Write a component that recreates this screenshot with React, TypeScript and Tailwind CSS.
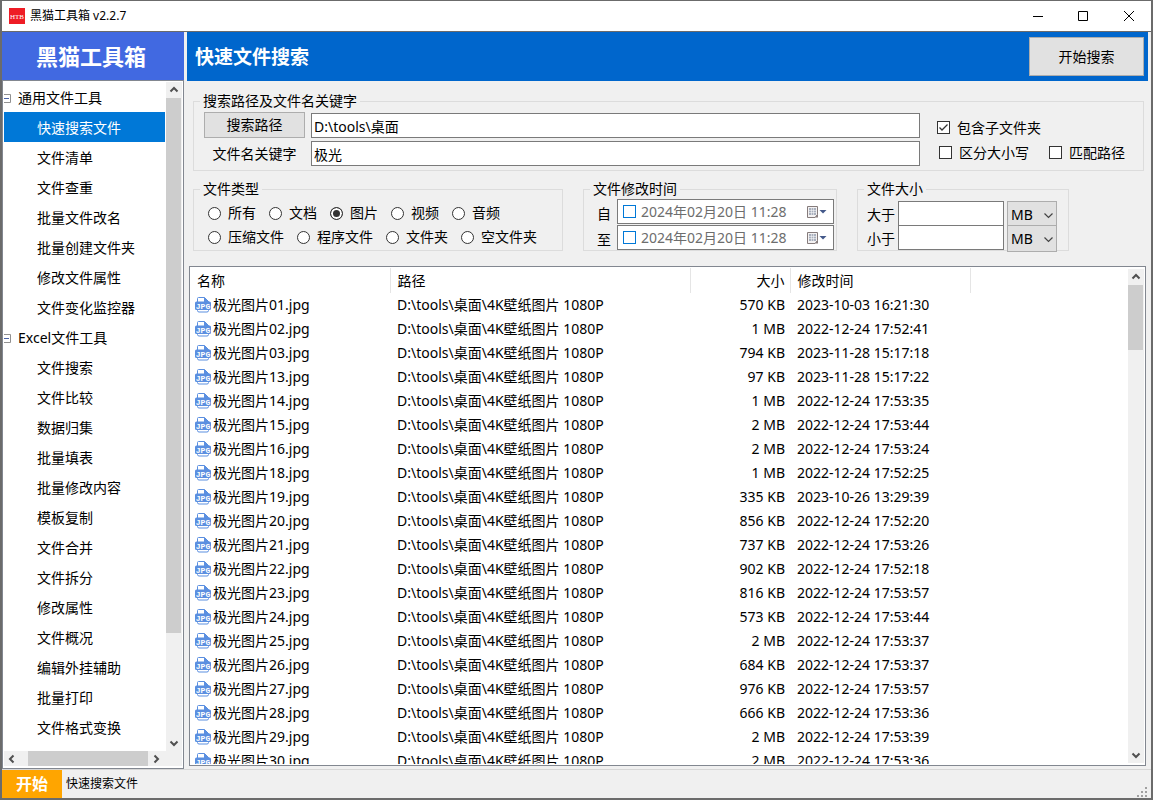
import type { ReactNode } from "react";
import clsx from "clsx";

const navGroups = [
  {
    title: "通用文件工具",
    items: [
      "快速搜索文件",
      "文件清单",
      "文件查重",
      "批量文件改名",
      "批量创建文件夹",
      "修改文件属性",
      "文件变化监控器",
    ],
  },
  {
    title: "Excel文件工具",
    items: [
      "文件搜索",
      "文件比较",
      "数据归集",
      "批量填表",
      "批量修改内容",
      "模板复制",
      "文件合并",
      "文件拆分",
      "修改属性",
      "文件概况",
      "编辑外挂辅助",
      "批量打印",
      "文件格式变换",
    ],
  },
];

const files = [
  ["01", "570 KB", "2023-10-03 16:21:30"],
  ["02", "1 MB", "2022-12-24 17:52:41"],
  ["03", "794 KB", "2023-11-28 15:17:18"],
  ["13", "97 KB", "2023-11-28 15:17:22"],
  ["14", "1 MB", "2022-12-24 17:53:35"],
  ["15", "2 MB", "2022-12-24 17:53:44"],
  ["16", "2 MB", "2022-12-24 17:53:24"],
  ["18", "1 MB", "2022-12-24 17:52:25"],
  ["19", "335 KB", "2023-10-26 13:29:39"],
  ["20", "856 KB", "2022-12-24 17:52:20"],
  ["21", "737 KB", "2022-12-24 17:53:26"],
  ["22", "902 KB", "2022-12-24 17:52:18"],
  ["23", "816 KB", "2022-12-24 17:53:57"],
  ["24", "573 KB", "2022-12-24 17:53:44"],
  ["25", "2 MB", "2022-12-24 17:53:37"],
  ["26", "684 KB", "2022-12-24 17:53:37"],
  ["27", "976 KB", "2022-12-24 17:53:57"],
  ["28", "666 KB", "2022-12-24 17:53:36"],
  ["29", "2 MB", "2022-12-24 17:53:39"],
  ["30", "2 MB", "2022-12-24 17:53:36"],
];

const fileTypes = [
  ["所有", "文档", "图片", "视频", "音频"],
  ["压缩文件", "程序文件", "文件夹", "空文件夹"],
];

const arrows = {
  up: "M4.5 9.5 8 6l3.5 3.5",
  down: "M4.5 6.5 8 10l3.5-3.5",
  left: "M9.5 4.5 6 8l3.5 3.5",
  right: "M6.5 4.5 10 8l-3.5 3.5",
};

function Arrow({ dir }: { dir: keyof typeof arrows }) {
  return (
    <svg viewBox="0 0 16 16" className="size-4 shrink-0" aria-hidden="true">
      <path d={arrows[dir]} fill="none" stroke="#505050" strokeWidth="2" />
    </svg>
  );
}

function JpgIcon() {
  return (
    <svg viewBox="0 0 16 16" className="size-4 shrink-0" aria-hidden="true">
      <path d="M2.5 5V1.5q0-1 1-1h6l4 4V5" fill="#fff" stroke="#5b8fe0" />
      <path d="M9 0v5h5z" fill="#5b8fe0" />
      <path d="M2.5 12.5v1q0 1.5 1.500 1.500h8q1.500 0 1.500-1.500v-1" fill="#fff" stroke="#5b8fe0" />
      <rect y="4.5" width="16" height="8.5" rx="1.5" fill="#5b8fe0" />
      <text
        x="8"
        y="11.500"
        textAnchor="middle"
        fontSize="8"
        fontWeight="700"
        fill="#fff"
        fontFamily="Liberation Mono, monospace"
      >
        JPG
      </text>
    </svg>
  );
}

function Group({ title, className, children }: { title: string; className?: string; children: ReactNode }) {
  return (
    <fieldset className={clsx("min-w-0 border border-[#dcdcdc]", className)}>
      <legend className="ml-1.5 px-[3px] leading-5">{title}</legend>
      {children}
    </fieldset>
  );
}

function Check({ label, checked }: { label: string; checked?: boolean }) {
  return (
    <label className="flex items-center gap-[7px] whitespace-nowrap">
      <span className="relative flex size-[13px]">
        <input
          type="checkbox"
          defaultChecked={checked}
          className="peer size-[13px] appearance-none border border-[#333] bg-white"
        />
        <svg viewBox="0 0 13 13" className="pointer-events-none absolute inset-0 hidden peer-checked:block">
          <path d="M2.5 6.5 5 9l5.5-5.5" fill="none" stroke="#333" strokeWidth="1.3" />
        </svg>
      </span>
      {label}
    </label>
  );
}

function DateRow({ id, label }: { id: string; label: string }) {
  return (
    <div className="flex h-[25px] items-center">
      <label htmlFor={id} className="w-[33px] shrink-0 pl-[13px] pt-1">
        {label}
      </label>
      <div className="flex h-full min-w-0 flex-1 items-center border border-[#7a7a7a] bg-white px-[5px]">
        <input
          type="checkbox"
          aria-label={label + "：启用"}
          className="size-[13px] shrink-0 appearance-none border border-[#0078d7] bg-white"
        />
        <input
          id={id}
          type="text"
          defaultValue="2024年02月20日 11:28"
          className="min-w-0 flex-1 bg-transparent pl-[5px] text-[#6d6d6d] outline-none"
        />
        <button type="button" aria-label="选择日期" className="shrink-0">
          <svg viewBox="0 0 22 14" className="h-[14px] w-[22px]">
            <path d="M1.5 1.5h10v8l-2.500 3h-7.500z" fill="#f4f2f2" stroke="#857b7b" />
            <path d="M3 3h7v7H3z" fill="#a9b0bd" />
            <path d="M5.500 3v7M7.500 3v7M3 5.500h7M3 7.500h7" stroke="#fff" strokeWidth=".5" />
            <path d="M9 12.500 12 9v3.500z" fill="#857b7b" />
            <path d="M13.500 5h7L17 8.500z" fill="#44598a" />
          </svg>
        </button>
      </div>
    </div>
  );
}

function TitleBar() {
  return (
    <header className="flex h-[31px] shrink-0 items-center border-b border-[#6b6b6b] bg-white pl-[7px] text-xs">
      <svg viewBox="0 0 16 16" className="size-4" aria-hidden="true">
        <rect width="16" height="16" fill="#ee1c25" />
        <text x="8" y="10.500" textAnchor="middle" fontSize="7" fill="#fff" fontFamily="Liberation Serif, serif">
          HTB
        </text>
      </svg>
      <h1 className="flex-1 pl-[5px]">黑猫工具箱 v2.2.7</h1>
      <button type="button" aria-label="最小化" className="flex w-[42px] justify-center">
        <svg viewBox="0 0 10 10" className="size-[10px]" stroke="#000">
          <path d="M0 5.500h10" />
        </svg>
      </button>
      <button type="button" aria-label="最大化" className="flex w-12 justify-center">
        <svg viewBox="0 0 10 10" className="size-[10px]" stroke="#000" fill="none">
          <path d="M.5.5h9v9h-9z" />
        </svg>
      </button>
      <button type="button" aria-label="关闭" className="flex w-11 justify-center">
        <svg viewBox="0 0 10 10" className="size-[10px]" stroke="#000">
          <path d="M0 0l10 10M10 0 0 10" />
        </svg>
      </button>
    </header>
  );
}

function Sidebar() {
  return (
    <aside className="flex w-[182px] shrink-0 flex-col">
      <h2 className="flex h-12 shrink-0 items-center justify-center bg-[#4169e1] pr-1 text-[22px] font-bold text-white">
        黑猫工具箱
      </h2>
      <div className="flex min-h-0 flex-1 flex-col border border-[#828790] bg-white px-px pb-0.5 pt-px">
        <div className="flex min-h-0 flex-1">
          <nav className="flex-1 overflow-hidden leading-[22px]">
            {navGroups.map((group, g) => (
              <div key={group.title}>
                <div className="flex h-[30px] items-center gap-[7px] pt-0.5">
                  <svg viewBox="0 0 7 9" className="h-[9px] w-[7px]" aria-hidden="true">
                    <path d="M0 .5h6.500v8H0" fill="#fff" stroke="#919191" />
                    <path d="M0 4.500h5" stroke="#4b63a7" />
                  </svg>
                  {group.title}
                </div>
                {group.items.map((item, i) => (
                  <a
                    key={item}
                    href="#"
                    className={clsx(
                      "flex h-[30px] items-center pl-[33px] pt-0.5",
                      g === 0 && i === 0 && "bg-[#0078d7] text-white",
                    )}
                  >
                    {item}
                  </a>
                ))}
              </div>
            ))}
          </nav>
          <div className="ml-px flex w-4 flex-col bg-[#f0f0f0]">
            <Arrow dir="up" />
            <div className="h-4/5 w-[15px] grow-0 bg-[#cdcdcd]" />
            <div className="flex-1" />
            <Arrow dir="down" />
          </div>
        </div>
        <div className="flex h-[15px] shrink-0 bg-[#f0f0f0] pr-[17px]">
          <Arrow dir="left" />
          <div className="ml-2 w-[120px] bg-[#cdcdcd]" />
          <Arrow dir="right" />
        </div>
      </div>
    </aside>
  );
}

function SearchPath() {
  return (
    <Group title="搜索路径及文件名关键字" className="ml-1.5 mr-1 pb-1">
      <div className="flex pl-2.5 pt-px">
        <div className="grid flex-1 grid-cols-[101px_1fr] items-end gap-x-1.5 gap-y-0.5">
          <button type="button" className="h-[26px] border border-[#adadad] bg-[#e1e1e1]">
            搜索路径
          </button>
          <input
            type="text"
            aria-label="搜索路径"
            defaultValue="D:\tools\桌面"
            className="h-[25px] border border-[#7a7a7a] bg-white px-0.5 outline-none"
          />
          <label htmlFor="keyword" className="h-[26px] text-center leading-[28px]">
            文件名关键字
          </label>
          <input
            id="keyword"
            type="text"
            defaultValue="极光"
            className="h-[25px] border border-[#7a7a7a] bg-white px-0.5 outline-none"
          />
        </div>
        <div className="grid w-[223px] grid-rows-[25px_25px] content-end pb-px pl-[17px]">
          <Check label="包含子文件夹" checked />
          <div className="flex gap-5 pl-0.5">
            <Check label="区分大小写" />
            <Check label="匹配路径" />
          </div>
        </div>
      </div>
    </Group>
  );
}

function Filters() {
  return (
    <div className="ml-1.5 mt-2 flex items-start gap-5">
      <Group title="文件类型" className="w-[370px]">
        <div className="flex h-[51px] flex-col pl-[14px] pt-0.5">
          {fileTypes.map((row, i) => (
            <div key={i} className="flex h-6 shrink-0 items-center gap-[13px]">
              {row.map((type) => (
                <label key={type} className="flex items-center gap-[7px] whitespace-nowrap">
                  <input
                    type="radio"
                    name="fileType"
                    defaultChecked={type === "图片"}
                    className="size-[13px] appearance-none rounded-full border border-[#333] bg-white checked:bg-[#333] checked:shadow-[inset_0_0_0_2px_#fff]"
                  />
                  {type}
                </label>
              ))}
            </div>
          ))}
        </div>
      </Group>
      <Group title="文件修改时间" className="w-[254px] pr-0.5">
        <div className="flex h-[51px] flex-col gap-px">
          <DateRow id="dateFrom" label="自" />
          <DateRow id="dateTo" label="至" />
        </div>
      </Group>
      <Group title="文件大小" className="w-[212px]">
        <div className="h-[51px] pl-[9px] pt-0.5">
          {["大于", "小于"].map((label, i) => (
            <div key={label} className="flex h-6 items-start">
              <label htmlFor={"size" + i} className="w-[31px] leading-[28px]">
                {label}
              </label>
              <input
                id={"size" + i}
                type="text"
                className="h-[25px] w-[106px] border border-[#7a7a7a] bg-white px-1 outline-none"
              />
              <div className="relative ml-[3px]">
                <select
                  aria-label={label + "单位"}
                  className="block h-[27px] w-[50px] appearance-none border border-[#adadad] bg-[#e1e1e1] pl-[3px]"
                >
                  <option>MB</option>
                  <option>KB</option>
                </select>
                <svg
                  viewBox="0 0 9 6"
                  className="pointer-events-none absolute right-1 top-3 h-1.5 w-[9px]"
                  aria-hidden="true"
                >
                  <path d="M.5.5l4 4 4-4" fill="none" stroke="#444" strokeWidth="1.2" />
                </svg>
              </div>
            </div>
          ))}
        </div>
      </Group>
    </div>
  );
}

function FileList() {
  return (
    <div className="mb-[3px] ml-0.5 mr-0.5 mt-[15px] flex min-h-0 flex-1 border border-[#828790] bg-white">
      <div className="min-w-0 flex-1 overflow-hidden border-y border-white">
        <table className="w-full table-fixed border-collapse text-left">
          <colgroup>
            <col className="w-[200px]" />
            <col className="w-[300px]" />
            <col className="w-[100px]" />
            <col className="w-[180px]" />
            <col />
          </colgroup>
          <thead>
            <tr className="h-[25px]">
              <th className="border-r border-[#e5e5e5] p-0 pl-[7px] font-normal">名称</th>
              <th className="border-r border-[#e5e5e5] p-0 pl-[7px] font-normal">路径</th>
              <th className="border-r border-[#e5e5e5] p-0 pr-[5px] text-right font-normal">大小</th>
              <th className="border-r border-[#e5e5e5] p-0 pl-[7px] font-normal">修改时间</th>
              <th className="p-0" />
            </tr>
          </thead>
          <tbody>
            {files.map(([no, size, time]) => (
              <tr key={no} className="h-6">
                <td className="p-0 pl-[5px]">
                  <span className="flex items-center gap-0.5">
                    <JpgIcon />
                    极光图片{no}.jpg
                  </span>
                </td>
                <td className="p-0 pl-[7px]">D:\tools\桌面\4K壁纸图片 1080P</td>
                <td className="p-0 pr-[5px] text-right">{size}</td>
                <td className="p-0 pl-[7px]">{time}</td>
                <td className="p-0" />
              </tr>
            ))}
          </tbody>
        </table>
      </div>
      <div className="my-0.5 mr-px flex w-4 flex-col bg-[#f0f0f0]">
        <Arrow dir="up" />
        <div className="h-[65px] w-[15px] bg-[#cdcdcd]" />
        <div className="flex-1" />
        <Arrow dir="down" />
      </div>
    </div>
  );
}

export default function App() {
  return (
    <div className="flex h-screen flex-col overflow-hidden border-x-2 border-b-2 border-t border-[#6b6b6b] bg-[#f0f0f0] font-['Noto_Sans','Noto_Sans_CJK_SC',sans-serif] text-sm leading-5 text-black">
      <TitleBar />
      <div className="flex min-h-0 flex-1 gap-[3px] pr-[3px]">
        <Sidebar />
        <main className="flex min-w-0 flex-1 flex-col">
          <div className="mb-2.5 flex h-[49px] shrink-0 items-center justify-between bg-[#0066cc] pl-2 pr-1">
            <h2 className="text-[19px] font-bold text-white">快速文件搜索</h2>
            <button type="button" className="h-[39px] w-[115px] border border-[#adadad] bg-[#e1e1e1]">
              开始搜索
            </button>
          </div>
          <SearchPath />
          <Filters />
          <FileList />
        </main>
      </div>
      <footer className="flex h-[29px] shrink-0 items-center border-t border-[#d7d7d7] text-xs">
        <button type="button" className="h-full w-[60px] bg-[#ffa500] text-base font-bold text-white">
          开始
        </button>
        <span className="flex-1 pl-1">快速搜索文件</span>
        <svg viewBox="0 0 11 11" className="mr-[3px] size-[11px] self-end" fill="#a0a0a0" aria-hidden="true">
          <path d="M8 0h2v2H8zM8 4h2v2H8zM8 8h2v2H8zM4 4h2v2H4zM4 8h2v2H4zM0 8h2v2H0z" />
        </svg>
      </footer>
    </div>
  );
}
